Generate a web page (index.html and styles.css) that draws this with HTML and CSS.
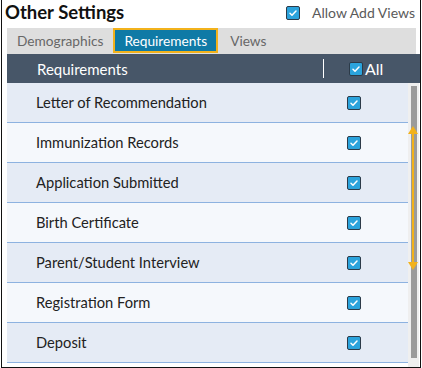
FILE: index.html
```html
<!DOCTYPE html>
<html>
<head>
<meta charset="utf-8">
<link rel="stylesheet" href="styles.css">
</head>
<body>
<div class="frame">
  <div class="titlebar">
    <h1 class="title">Other Settings</h1>
    <label class="allow">
      <svg class="cb" viewBox="0 0 14 14"><rect x="0.5" y="0.5" width="13" height="13" rx="1.5"/><polyline points="4,7.3 6,9.2 10,5"/></svg>
      <span>Allow Add Views</span>
    </label>
  </div>
  <div class="content">
    <div class="tabs">
      <span class="tab">Demographics</span>
      <span class="tab active">Requirements</span>
      <span class="tab">Views</span>
    </div>
    <div class="table">
      <div class="thead">
        <span class="th-name">Requirements</span>
        <span class="sep"></span>
        <svg class="cb" viewBox="0 0 14 14"><rect x="0.5" y="0.5" width="13" height="13" rx="1.5"/><polyline points="4,7.3 6,9.2 10,5"/></svg>
        <span class="all">All</span>
      </div>
      <div class="body">
        <div class="rows">
          <div class="row odd"><span>Letter of Recommendation</span><svg class="cb" viewBox="0 0 14 14"><rect x="0.5" y="0.5" width="13" height="13" rx="1.5"/><polyline points="4,7.3 6,9.2 10,5"/></svg></div>
          <div class="row even"><span>Immunization Records</span><svg class="cb" viewBox="0 0 14 14"><rect x="0.5" y="0.5" width="13" height="13" rx="1.5"/><polyline points="4,7.3 6,9.2 10,5"/></svg></div>
          <div class="row odd"><span>Application Submitted</span><svg class="cb" viewBox="0 0 14 14"><rect x="0.5" y="0.5" width="13" height="13" rx="1.5"/><polyline points="4,7.3 6,9.2 10,5"/></svg></div>
          <div class="row even"><span>Birth Certificate</span><svg class="cb" viewBox="0 0 14 14"><rect x="0.5" y="0.5" width="13" height="13" rx="1.5"/><polyline points="4,7.3 6,9.2 10,5"/></svg></div>
          <div class="row odd"><span>Parent/Student Interview</span><svg class="cb" viewBox="0 0 14 14"><rect x="0.5" y="0.5" width="13" height="13" rx="1.5"/><polyline points="4,7.3 6,9.2 10,5"/></svg></div>
          <div class="row even"><span>Registration Form</span><svg class="cb" viewBox="0 0 14 14"><rect x="0.5" y="0.5" width="13" height="13" rx="1.5"/><polyline points="4,7.3 6,9.2 10,5"/></svg></div>
          <div class="row odd"><span>Deposit</span><svg class="cb" viewBox="0 0 14 14"><rect x="0.5" y="0.5" width="13" height="13" rx="1.5"/><polyline points="4,7.3 6,9.2 10,5"/></svg></div>
        </div>
        <div class="scrollbar"><div class="thumb"></div></div>
        <svg class="annot" viewBox="0 0 10 144" width="10" height="144">
          <polygon points="5,0 10,8 0,8" />
          <rect x="4" y="6" width="2" height="132"/>
          <polygon points="5,144 10,136 0,136" />
        </svg>
      </div>
    </div>
  </div>
</div>
</body>
</html>
```
FILE: styles.css
```css
* { box-sizing: border-box; }
body {
  margin: 0;
  background: #fff;
  font-family: "Lato", "Open Sans", sans-serif;
}
.frame {
  margin-left: 1px;
  width: 420px;
  height: 368px;
  border-left: 1px solid #111;
  border-right: 1px solid #111;
  border-bottom: 1px solid #111;
  display: flex;
  flex-direction: column;
}
.titlebar {
  height: 28px;
  display: flex;
  align-items: center;
  justify-content: space-between;
  padding: 0 5px 0 3px;
}
.title {
  margin: 0;
  font-size: 18.5px;
  font-weight: 700;
  color: #111;
  line-height: 24px;
  margin-top: -4px;
}
.allow {
  display: flex;
  align-items: center;
  gap: 12px;
  font-size: 14px;
  color: #5a5a5a;
  margin-top: -3px;
}
.cb { width: 14px; height: 14px; display: block; flex: none; }
.cb rect { fill: #2ba3dc; stroke: #2c3a48; stroke-width: 1; }
.cb polyline { fill: none; stroke: #fff; stroke-width: 1.5; stroke-linecap: round; stroke-linejoin: round; }
.content {
  padding-left: 5px;
  flex: 1;
  display: flex;
  flex-direction: column;
}
.tabs {
  height: 26px;
  background: #dedede;
  display: flex;
  align-items: flex-start;
  margin-right: 4px;
}
.tab {
  font-size: 13.7px;
  color: #676767;
  padding: 0 10px;
  line-height: 25px;
  height: 25px;
}
.tab.active {
  background: #0f7aa6;
  color: #fff;
  border: 2px solid #f2b21c;
  line-height: 21px;
  padding: 0 9px;
  margin: 0 2px 0 0;
}
.table { display: flex; flex-direction: column; flex: 1; }
.thead {
  height: 29px;
  background: #475668;
  display: flex;
  align-items: center;
  color: #fff;
  font-size: 15px;
}
.th-name { width: 316px; padding-left: 30px; }
.sep { width: 1px; height: 19px; background: #fff; margin-right: 25px; }
.all { margin-left: 2px; font-size: 16px; }
.body { position: relative; display: flex; flex: 1; }
.rows { width: 401px; }
.row {
  height: 40px;
  border-bottom: 1px solid #8db2e0;
  display: grid;
  grid-template-columns: 311px 14px;
  align-items: center;
  padding-left: 29px;
  font-size: 14.7px;
  color: #222;
}
.row span { margin-top: -1px; }
.row.odd { background: #e5ebf5; }
.row.even { background: #f5f8fc; }
.scrollbar {
  width: 11px;
  background: #efefef;
  padding: 3px 2px 9px 3px;
}
.thumb { background: #9b9b9b; height: 100%; }
.annot {
  position: absolute;
  left: 401px;
  top: 43px;
  fill: #f2b21c;
}
```
